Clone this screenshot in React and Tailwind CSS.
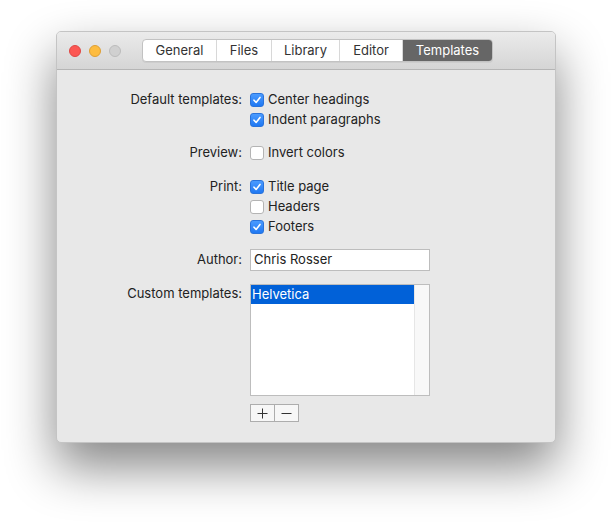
import React from 'react';

const font = { fontFamily: 'Inter, "Open Sans", "Liberation Sans", sans-serif' };

const Check = ({ checked }) =>
    checked ? (
        <span className="w-[14px] h-[14px] rounded-[3px] bg-gradient-to-b from-[#4a9bff] to-[#1f78f2] border border-[#2a73da] flex items-center justify-center shrink-0">
            <svg width="10" height="10" viewBox="0 0 10 10">
                <path d="M2 5.2 L4.1 7.4 L8 2.4" fill="none" stroke="white" strokeWidth="1.6" strokeLinecap="round" strokeLinejoin="round" />
            </svg>
        </span>
    ) : (
        <span className="w-[14px] h-[14px] rounded-[3px] bg-white border border-[#b4b4b4] shrink-0" />
    );

const Option = ({ checked, children }) => (
    <div className="h-5 flex items-center gap-[4px]">
        <Check checked={checked} />
        <span>{children}</span>
    </div>
);

const Row = ({ label, className = '', labelClass = 'h-5 flex items-center', children }) => (
    <div className={`grid grid-cols-[185px_1fr] gap-x-2 ${className}`}>
        <div className={`justify-end text-right ${labelClass}`}>{label}</div>
        <div>{children}</div>
    </div>
);

const tabs = ['General', 'Files', 'Library', 'Editor', 'Templates'];
const widths = ['w-[73px]', 'w-[55px]', 'w-[68px]', 'w-[63px]', 'w-[90px]'];

export default function App() {
    return (
        <div className="min-h-[523px] bg-white pt-[31px] pl-[56px]" style={font}>
            <div className="w-[500px] h-[412px] rounded-[5px] bg-[#e8e8e8] shadow-[0_24px_50px_rgba(0,0,0,0.48)] border border-[#c4c4c4] overflow-hidden text-[13px] text-[#222]">
                {/* Title bar */}
                <div className="h-[38px] bg-gradient-to-b from-[#ebebeb] to-[#d5d5d5] border-b border-[#b5b5b5] flex items-center pl-[12px]">
                    <div className="flex gap-[8px]">
                        <span className="w-3 h-3 rounded-full bg-[#fc5753] border border-[#df4744]" />
                        <span className="w-3 h-3 rounded-full bg-[#fdbc40] border border-[#de9f34]" />
                        <span className="w-3 h-3 rounded-full bg-[#d0d0d0] border border-[#bcbcbc]" />
                    </div>
                    <div className="ml-[21px] flex h-[23px] rounded-[4px] border border-[#c2c2c2] bg-white overflow-hidden shadow-[0_1px_0_rgba(0,0,0,0.05)]">
                        {tabs.map((t, i) => (
                            <div
                                key={t}
                                className={`${widths[i]} flex items-center justify-center ${i > 0 ? 'border-l border-[#d8d8d8]' : ''} ${t === 'Templates' ? 'bg-[#666666] text-white' : 'text-[#333]'}`}
                            >
                                {t}
                            </div>
                        ))}
                    </div>
                </div>

                {/* Content */}
                <div className="pt-[20px]">
                    <Row label="Default templates:">
                        <Option checked>Center headings</Option>
                        <Option checked>Indent paragraphs</Option>
                    </Row>
                    <Row label="Preview:" className="mt-[13px]">
                        <Option>Invert colors</Option>
                    </Row>
                    <Row label="Print:" className="mt-[14px]">
                        <Option checked>Title page</Option>
                        <Option>Headers</Option>
                        <Option checked>Footers</Option>
                    </Row>
                    <Row label="Author:" className="mt-[12px]" labelClass="h-[22px] flex items-center">
                        <div className="w-[180px] h-[22px] bg-white border border-[#bdbdbd] flex items-center px-[3px]">Chris Rosser</div>
                    </Row>
                    <Row label="Custom templates:" className="mt-[13px]" labelClass="h-5 flex items-center">
                        <div className="w-[180px] h-[112px] bg-white border border-[#bdbdbd] flex">
                            <div className="flex-1">
                                <div className="h-[19px] bg-[#0161d8] text-white flex items-center pl-[1px]">Helvetica</div>
                            </div>
                            <div className="w-[15px] bg-[#f8f8f8] border-l border-[#e6e6e6]" />
                        </div>
                        <div className="mt-[8px] flex w-[49px] h-[18px] border border-[#adadad] bg-[#f7f7f7]">
                            <div className="flex-1 flex items-center justify-center border-r border-[#adadad]">
                                <svg width="11" height="11" viewBox="0 0 11 11"><path d="M5.5 0.5 V10.5 M0.5 5.5 H10.5" stroke="#333" strokeWidth="1" /></svg>
                            </div>
                            <div className="flex-1 flex items-center justify-center">
                                <svg width="11" height="11" viewBox="0 0 11 11"><path d="M0.5 5.5 H10.5" stroke="#333" strokeWidth="1" /></svg>
                            </div>
                        </div>
                    </Row>
                </div>
            </div>
        </div>
    );
}
